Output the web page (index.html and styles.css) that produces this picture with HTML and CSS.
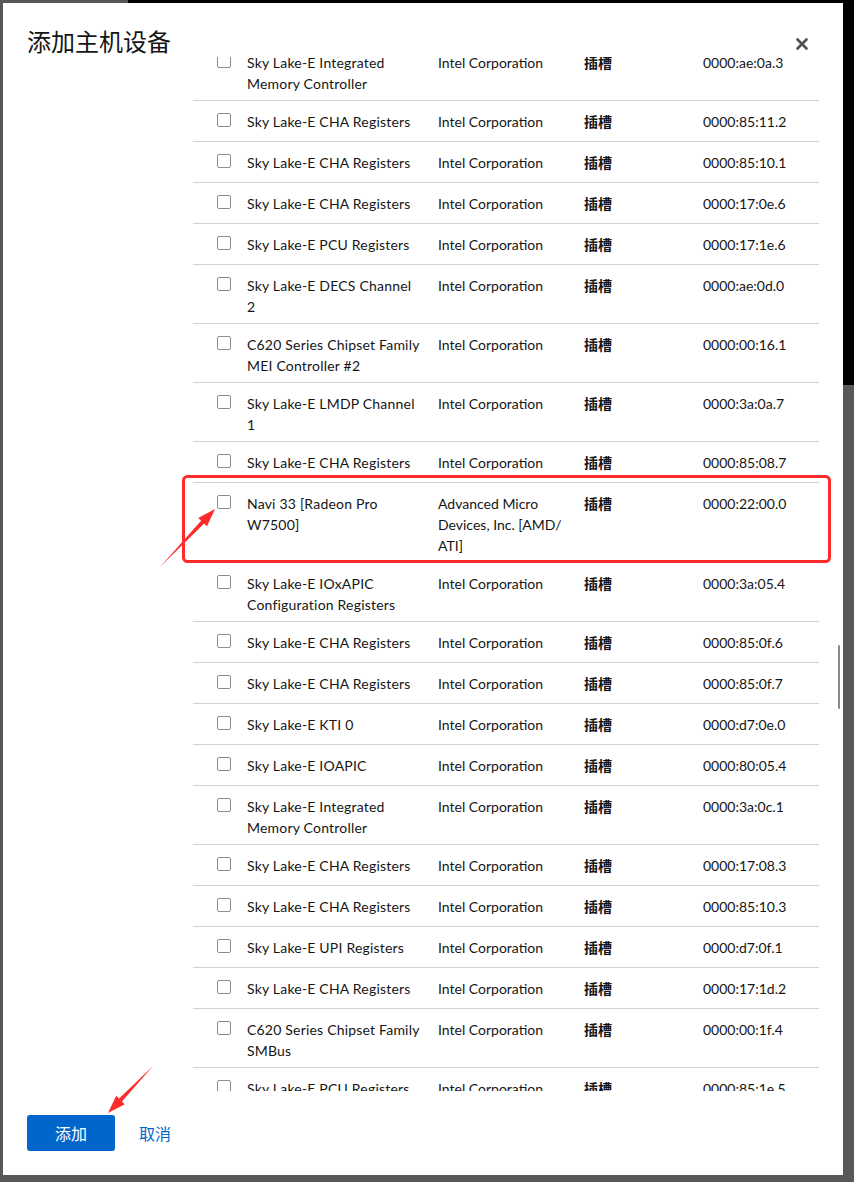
FILE: index.html
```html
<!DOCTYPE html>
<html lang="zh">
<head>
<meta charset="utf-8">
<title>添加主机设备</title>
<link rel="stylesheet" href="styles.css">
</head>
<body>
<div class="modal">
  <header class="modal-header">
    <h1 class="modal-title">添加主机设备</h1>
    <button class="close-btn" aria-label="关闭">
      <svg width="12" height="12" viewBox="0 0 12 12"><path d="M1.5 1.5 L10.5 10.5 M10.5 1.5 L1.5 10.5" stroke="#4f5255" stroke-width="2.6" stroke-linecap="round"/></svg>
    </button>
  </header>
  <div class="modal-body">
    <div class="list">
      <div class="row"><span class="cb"><i></i></span><span class="name">Sky Lake-E Integrated Memory Controller</span><span class="vendor">Intel Corporation</span><span class="slot">插槽</span><span class="addr">0000:ae:0a.3</span></div>
      <div class="row"><span class="cb"><i></i></span><span class="name">Sky Lake-E CHA Registers</span><span class="vendor">Intel Corporation</span><span class="slot">插槽</span><span class="addr">0000:85:11.2</span></div>
      <div class="row"><span class="cb"><i></i></span><span class="name">Sky Lake-E CHA Registers</span><span class="vendor">Intel Corporation</span><span class="slot">插槽</span><span class="addr">0000:85:10.1</span></div>
      <div class="row"><span class="cb"><i></i></span><span class="name">Sky Lake-E CHA Registers</span><span class="vendor">Intel Corporation</span><span class="slot">插槽</span><span class="addr">0000:17:0e.6</span></div>
      <div class="row"><span class="cb"><i></i></span><span class="name">Sky Lake-E PCU Registers</span><span class="vendor">Intel Corporation</span><span class="slot">插槽</span><span class="addr">0000:17:1e.6</span></div>
      <div class="row"><span class="cb"><i></i></span><span class="name">Sky Lake-E DECS Channel 2</span><span class="vendor">Intel Corporation</span><span class="slot">插槽</span><span class="addr">0000:ae:0d.0</span></div>
      <div class="row"><span class="cb"><i></i></span><span class="name">C620 Series Chipset Family MEI Controller #2</span><span class="vendor">Intel Corporation</span><span class="slot">插槽</span><span class="addr">0000:00:16.1</span></div>
      <div class="row"><span class="cb"><i></i></span><span class="name">Sky Lake-E LMDP Channel 1</span><span class="vendor">Intel Corporation</span><span class="slot">插槽</span><span class="addr">0000:3a:0a.7</span></div>
      <div class="row"><span class="cb"><i></i></span><span class="name">Sky Lake-E CHA Registers</span><span class="vendor">Intel Corporation</span><span class="slot">插槽</span><span class="addr">0000:85:08.7</span></div>
      <div class="row"><span class="cb"><i></i></span><span class="name">Navi 33 [Radeon Pro W7500]</span><span class="vendor">Advanced Micro Devices, Inc. [AMD/<wbr>ATI]</span><span class="slot">插槽</span><span class="addr">0000:22:00.0</span></div>
      <div class="row"><span class="cb"><i></i></span><span class="name">Sky Lake-E IOxAPIC Configuration Registers</span><span class="vendor">Intel Corporation</span><span class="slot">插槽</span><span class="addr">0000:3a:05.4</span></div>
      <div class="row"><span class="cb"><i></i></span><span class="name">Sky Lake-E CHA Registers</span><span class="vendor">Intel Corporation</span><span class="slot">插槽</span><span class="addr">0000:85:0f.6</span></div>
      <div class="row"><span class="cb"><i></i></span><span class="name">Sky Lake-E CHA Registers</span><span class="vendor">Intel Corporation</span><span class="slot">插槽</span><span class="addr">0000:85:0f.7</span></div>
      <div class="row"><span class="cb"><i></i></span><span class="name">Sky Lake-E KTI 0</span><span class="vendor">Intel Corporation</span><span class="slot">插槽</span><span class="addr">0000:d7:0e.0</span></div>
      <div class="row"><span class="cb"><i></i></span><span class="name">Sky Lake-E IOAPIC</span><span class="vendor">Intel Corporation</span><span class="slot">插槽</span><span class="addr">0000:80:05.4</span></div>
      <div class="row"><span class="cb"><i></i></span><span class="name">Sky Lake-E Integrated Memory Controller</span><span class="vendor">Intel Corporation</span><span class="slot">插槽</span><span class="addr">0000:3a:0c.1</span></div>
      <div class="row"><span class="cb"><i></i></span><span class="name">Sky Lake-E CHA Registers</span><span class="vendor">Intel Corporation</span><span class="slot">插槽</span><span class="addr">0000:17:08.3</span></div>
      <div class="row"><span class="cb"><i></i></span><span class="name">Sky Lake-E CHA Registers</span><span class="vendor">Intel Corporation</span><span class="slot">插槽</span><span class="addr">0000:85:10.3</span></div>
      <div class="row"><span class="cb"><i></i></span><span class="name">Sky Lake-E UPI Registers</span><span class="vendor">Intel Corporation</span><span class="slot">插槽</span><span class="addr">0000:d7:0f.1</span></div>
      <div class="row"><span class="cb"><i></i></span><span class="name">Sky Lake-E CHA Registers</span><span class="vendor">Intel Corporation</span><span class="slot">插槽</span><span class="addr">0000:17:1d.2</span></div>
      <div class="row"><span class="cb"><i></i></span><span class="name">C620 Series Chipset Family SMBus</span><span class="vendor">Intel Corporation</span><span class="slot">插槽</span><span class="addr">0000:00:1f.4</span></div>
      <div class="row"><span class="cb"><i></i></span><span class="name">Sky Lake-E PCU Registers</span><span class="vendor">Intel Corporation</span><span class="slot">插槽</span><span class="addr">0000:85:1e.5</span></div>
    </div>
  </div>
  <footer class="modal-footer">
    <button class="btn-primary">添加</button>
    <button class="btn-link">取消</button>
  </footer>
  <div class="scroll-thumb"></div>
</div>
<svg class="annotations" width="854" height="1182" viewBox="0 0 854 1182">
  <rect x="183.5" y="476.5" width="646" height="85" rx="4" fill="none" stroke="#ff2a2a" stroke-width="3"/>
  <polygon points="160,567 201.1,520.7 198.2,518 215,509 207,526.2 204.1,523.5" fill="#ff2a2a"/>
  <polygon points="153,1066 119.1,1098.6 116.2,1095.8 108,1113 124.8,1104.2 121.9,1101.4" fill="#ff2a2a"/>
</svg>
</body>
</html>
```
FILE: styles.css
```css
html, body {
  margin: 0;
  padding: 0;
}
body {
  width: 854px;
  height: 1182px;
  padding: 3px;
  box-sizing: border-box;
  background:
    linear-gradient(#000, #000) 128px 0 / 726px 3px no-repeat,
    linear-gradient(#000, #000) 843px 0 / 11px 385px no-repeat,
    #585858;
  font-family: "Lato", "Noto Sans CJK SC", sans-serif;
  color: #151515;
  position: relative;
  overflow: hidden;
}
.modal {
  position: relative;
  width: 840px;
  height: 1172px;
  background: #fff;
  display: flex;
  flex-direction: column;
}
.modal-header {
  display: flex;
  justify-content: space-between;
  align-items: center;
  padding: 24px 35px 0 24px;
  height: 30px;
}
.modal-title {
  margin: 0;
  font-family: "Noto Sans CJK SC", sans-serif;
  font-weight: 400;
  font-size: 24px;
  line-height: 30px;
  color: #151515;
  position: relative;
  top: -1px;
}
.close-btn {
  border: 0;
  background: none;
  padding: 0;
  width: 12px;
  height: 12px;
  display: flex;
  position: relative;
  top: 2px;
}
.modal-body {
  flex: 1;
  min-height: 0;
  overflow: hidden;
  padding: 0 24px 0 190px;
}
.list {
  margin-top: -15px;
}
.row {
  display: grid;
  grid-template-columns: 30px 191px 146px 119px 1fr;
  padding: 10px 0 6px 24px;
  border-bottom: 1px solid #d2d2d2;
  font-size: 14px;
  line-height: 21px;
}
.row > span {
  padding-right: 16px;
}
.row > .name {
  letter-spacing: 0.2px;
}
.row > .cb {
  padding-right: 0;
  height: 24px;
}
.cb i {
  display: block;
  width: 12px;
  height: 12px;
  margin-top: 2px;
  border: 1px solid #8a8d90;
  border-radius: 2px;
  background: #fff;
}
.slot {
  font-family: "Noto Sans CJK SC", sans-serif;
  font-weight: 700;
}
.modal-footer {
  display: flex;
  align-items: center;
  gap: 24px;
  padding: 24px 24px 24px 24px;
  height: 36px;
}
.btn-primary {
  width: 88px;
  height: 36px;
  border: 0;
  border-radius: 3px;
  background: #0066cc;
  color: #fff;
  font-family: "Noto Sans CJK SC", sans-serif;
  font-size: 16px;
  padding: 0;
}
.btn-link {
  border: 0;
  background: none;
  padding: 0;
  color: #0066cc;
  font-family: "Noto Sans CJK SC", sans-serif;
  font-size: 16px;
}
.scroll-thumb {
  position: absolute;
  left: 835px;
  top: 642px;
  width: 2px;
  height: 64px;
  background: #8a8a8a;
  border-radius: 1px;
}
.annotations {
  position: absolute;
  left: 0;
  top: 0;
  pointer-events: none;
}
```
